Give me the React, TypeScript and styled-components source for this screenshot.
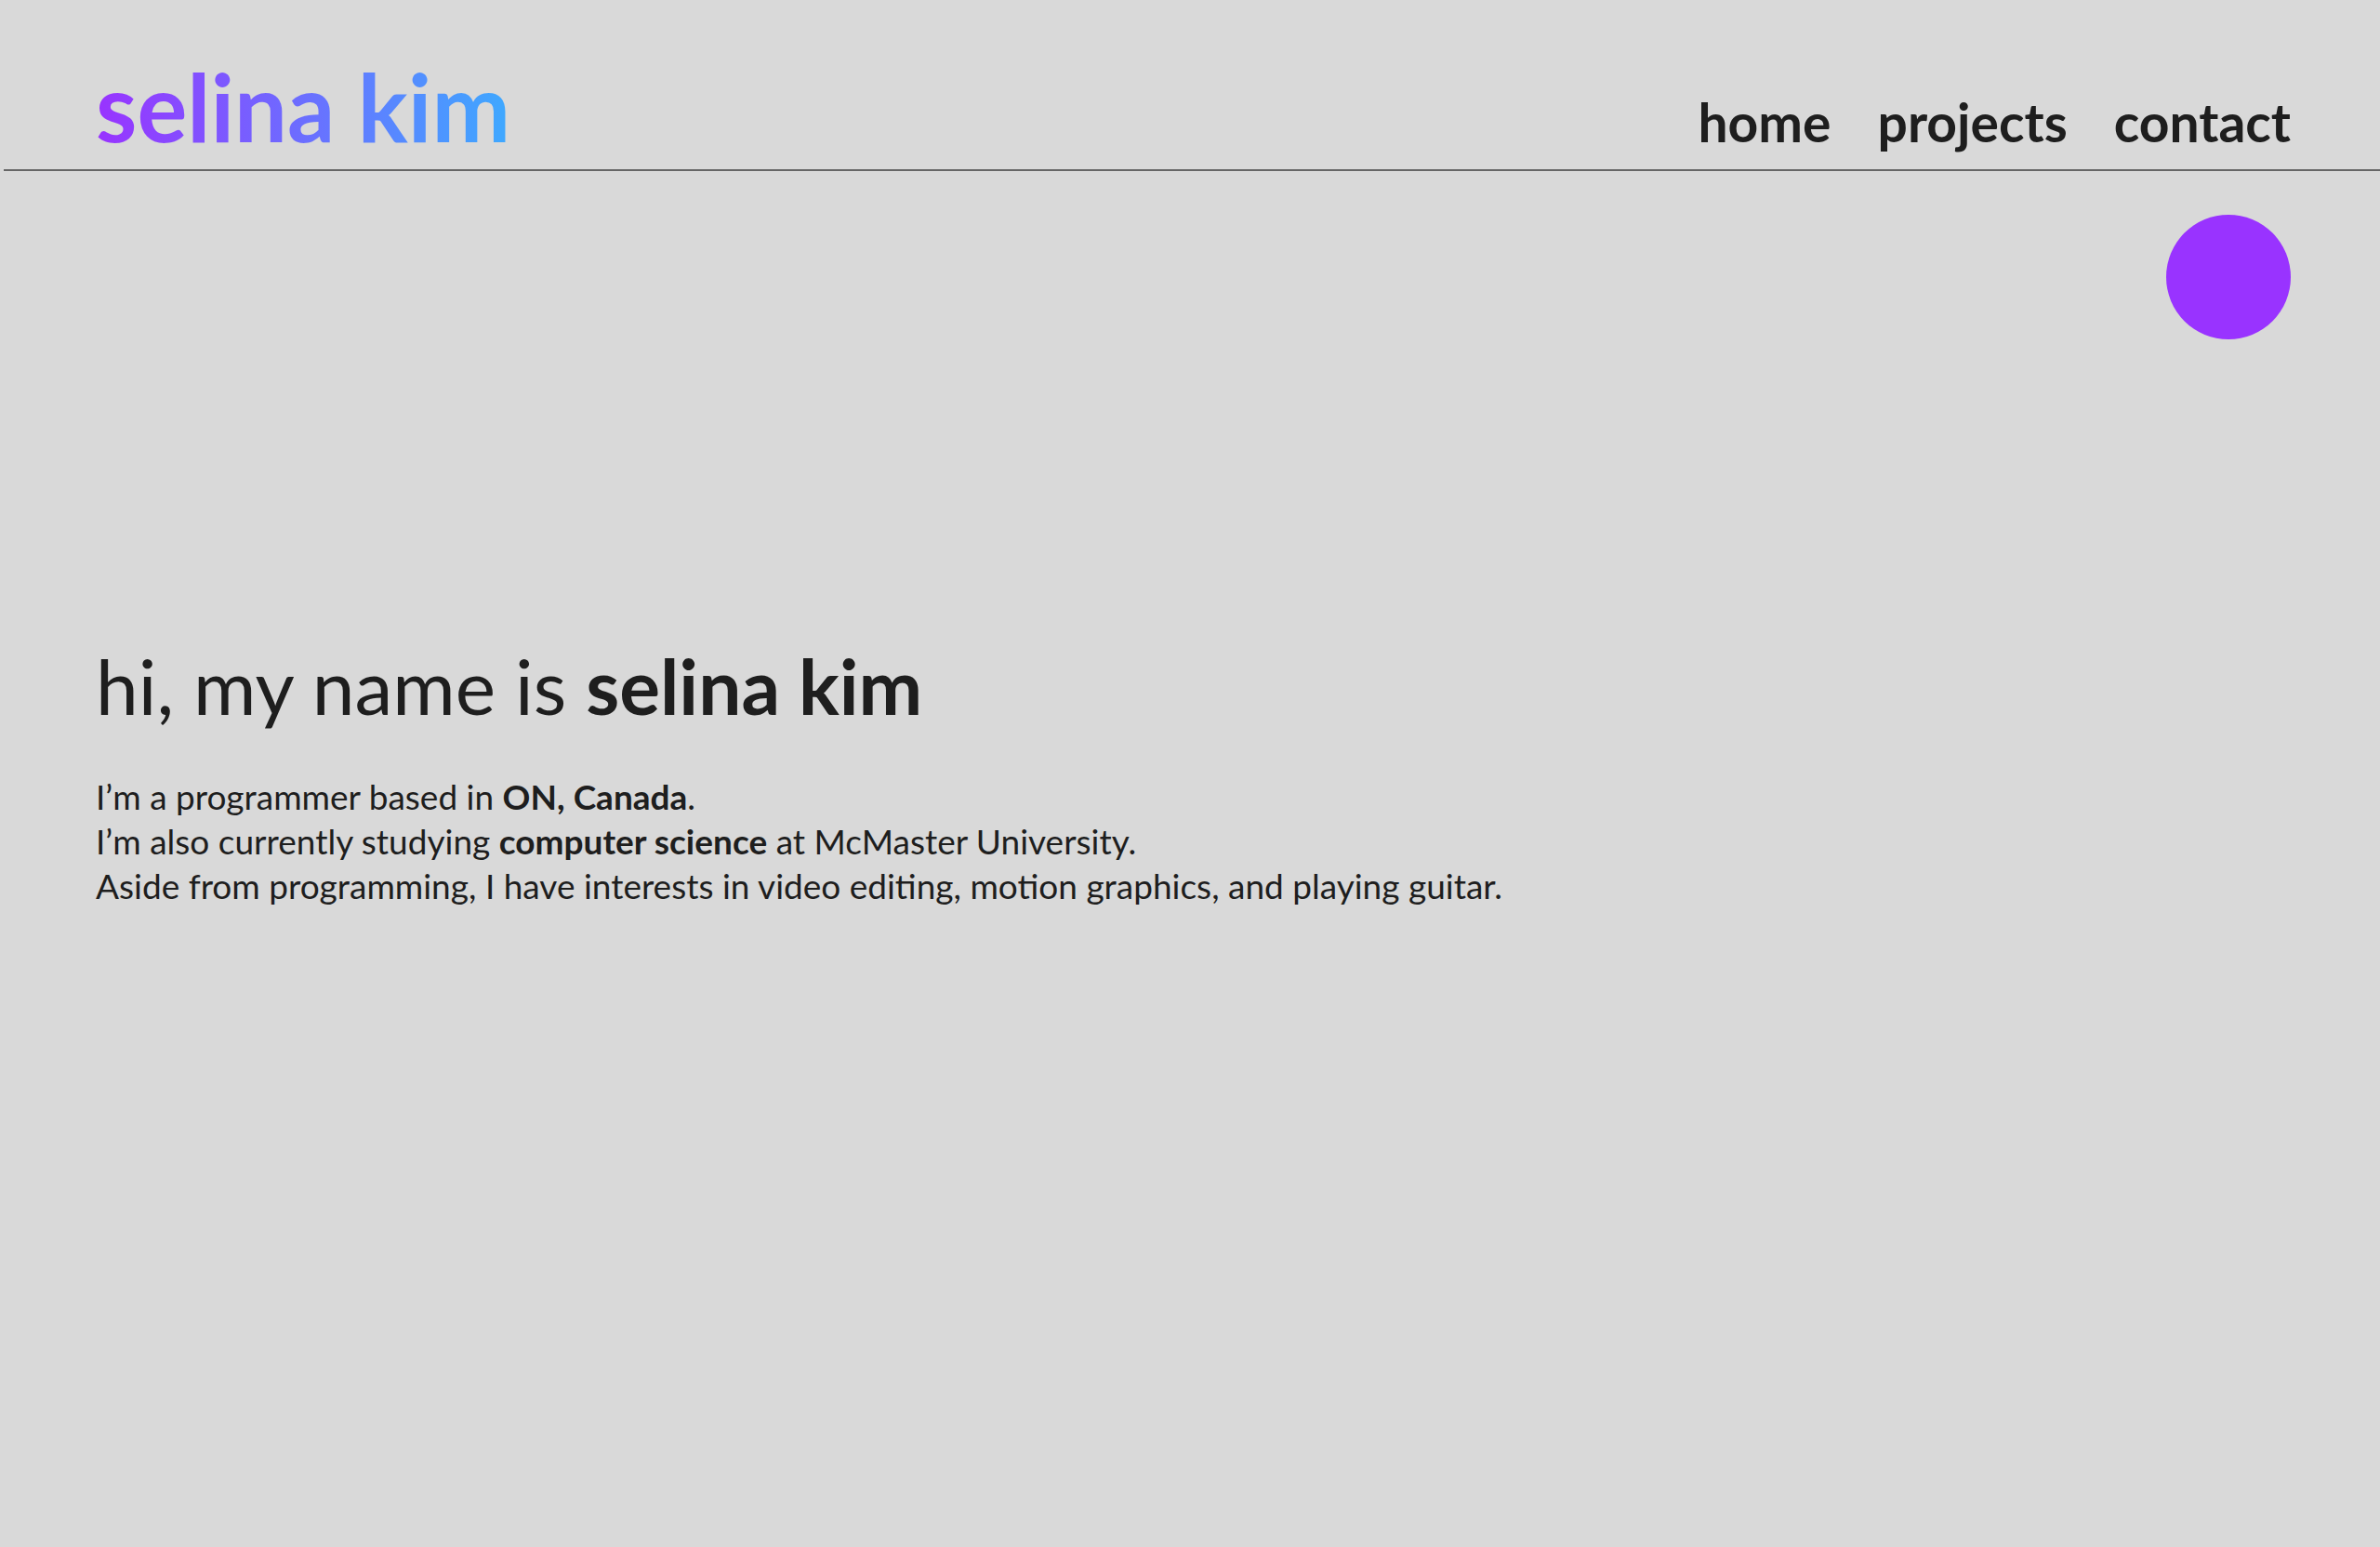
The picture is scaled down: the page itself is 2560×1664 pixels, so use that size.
import styled, { createGlobalStyle } from "styled-components";

const GlobalStyle = createGlobalStyle`
  html, body {
    margin: 0;
    padding: 0;
    background: #d9d9d9;
  }
  body {
    font-family: "Lato", "Noto Sans", sans-serif;
    color: #1e1e1e;
  }
`;

const navItems = ["home", "projects", "contact"];

export default function App() {
  return (
    <>
      <GlobalStyle />
      <Page>
        <Header>
          <Logo>selina kim</Logo>
          <Nav>
            {navItems.map((item) => (
              <NavLink key={item} href="#">
                {item}
              </NavLink>
            ))}
          </Nav>
        </Header>
        <Main>
          <CircleRow>
            <Circle />
          </CircleRow>
          <Hero>
            <Title>
              hi, my name is <b>selina kim</b>
            </Title>
            <Intro>
              I’m a programmer based in <b>ON, Canada</b>.
              <br />
              I’m also currently studying <b>computer science</b> at McMaster
              University.
              <br />
              Aside from programming, I have interests in video editing, motion
              graphics, and playing guitar.
            </Intro>
          </Hero>
        </Main>
      </Page>
    </>
  );
}

/* ========= styled-components ========== */

const Page = styled.div`
  min-height: 100vh;
  background: #d9d9d9;
`;

const Header = styled.header`
  display: flex;
  align-items: baseline;
  justify-content: space-between;
  margin-left: 4px;
  padding: 64px 96px 17px 99px;
  border-bottom: 2px solid #666666;
`;

const Logo = styled.div`
  font-size: 101px;
  line-height: 1;
  font-weight: 700;
  background: linear-gradient(90deg, #9933ff 0%, #3ea9ff 100%);
  -webkit-background-clip: text;
  background-clip: text;
  color: transparent;
`;

const Nav = styled.nav`
  display: flex;
  gap: 50px;
`;

const NavLink = styled.a`
  font-size: 57px;
  font-weight: 700;
  color: #1e1e1e;
  text-decoration: none;
`;

const Main = styled.main`
  padding: 0 96px 0 103px;
`;

const CircleRow = styled.div`
  display: flex;
  justify-content: flex-end;
  padding-top: 47px;
`;

const Circle = styled.div`
  width: 134px;
  height: 134px;
  border-radius: 50%;
  background: #9933ff;
`;

const Hero = styled.section`
  margin-top: 323px;
`;

const Title = styled.h1`
  margin: 0;
  font-size: 82px;
  line-height: 1.2;
  font-weight: 400;

  b {
    font-weight: 700;
  }
`;

const Intro = styled.p`
  margin: 47px 0 0;
  font-size: 37px;
  line-height: 48px;

  b {
    font-weight: 700;
  }
`;
